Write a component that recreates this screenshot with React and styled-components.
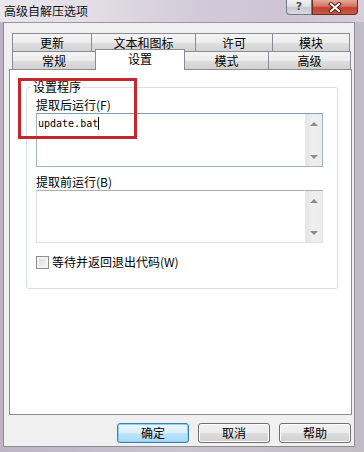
import React from "react";
import styled, { createGlobalStyle } from "styled-components";

const GlobalStyle = createGlobalStyle`
  html, body {
    margin: 0;
    padding: 0;
  }
  body {
    width: 364px;
    height: 452px;
    overflow: hidden;
    font-family: "Noto Sans CJK SC", "Liberation Sans", sans-serif;
    font-size: 12px;
    color: #000;
  }
`;

const Window = styled.div`
  position: relative;
  width: 364px;
  height: 452px;
  display: flex;
  flex-direction: column;
  background: linear-gradient(90deg, #bdb5c4 0%, #c9c2cf 50%, #c2bcc6 100%);
  overflow: hidden;
`;

const TitleBar = styled.div`
  height: 22px;
  flex: none;
  display: flex;
  align-items: flex-start;
  padding: 0 6px 0 4px;
  background: linear-gradient(90deg, #e9e6ec 0%, #e2dde6 25%, #d2cad8 55%, #cdc5d3 80%, #d6cfdb 100%);
`;

const Title = styled.div`
  flex: 1;
  line-height: 22px;
  font-size: 12px;
  color: #111;
`;

const CaptionButton = styled.div`
  height: 15px;
  width: ${(p) => p.$w}px;
  display: flex;
  align-items: center;
  justify-content: center;
  box-sizing: border-box;
  border: 1px solid ${(p) => (p.$close ? "#6b2a22" : "#727884")};
  border-top: none;
  border-radius: ${(p) => (p.$close ? "0 0 4px 0" : "0 0 0 4px")};
  background: ${(p) =>
    p.$close
      ? "linear-gradient(180deg, #e8a898 0%, #d27563 45%, #c2412e 55%, #c85a44 100%)"
      : "linear-gradient(180deg, #f2f2f4 0%, #dfe0e4 45%, #c9cbd1 55%, #d8dade 100%)"};
  color: #555;
  font-family: "DejaVu Sans", sans-serif;
  font-size: 11px;
  font-weight: bold;
  line-height: 14px;
`;

const Body = styled.div`
  flex: 1;
  display: flex;
  margin: 0 9px 5px 3px;
`;

const Client = styled.div`
  flex: 1;
  display: flex;
  flex-direction: column;
  background: #f0f0f0;
  border: 1px solid #8d8a92;
  border-top-color: #9a96a0;
  padding: 10px 2px 3px 5px;
`;

const TabStrip = styled.div`
  display: flex;
  flex-direction: column;
  padding-left: 3px;
`;

const TabRow = styled.div`
  display: flex;
  align-items: flex-end;
  height: ${(p) => p.$h}px;
  margin-top: ${(p) => (p.$back ? 0 : -1)}px;
`;

const Tab = styled.div`
  position: relative;
  box-sizing: border-box;
  width: ${(p) => p.$w}px;
  height: ${(p) => (p.$active ? 21 : p.$h)}px;
  margin-left: -1px;
  margin-bottom: ${(p) => (p.$active ? -1 : 0)}px;
  z-index: ${(p) => (p.$active ? 2 : 1)};
  border: 1px solid #898c95;
  border-bottom: none;
  background: ${(p) =>
    p.$active
      ? "#ffffff"
      : "linear-gradient(180deg, #f4f4f4 0%, #ececec 50%, #dedede 51%, #d2d2d2 100%)"};
  text-align: center;
  line-height: ${(p) => (p.$active ? 17 : p.$h - 1)}px;
  font-size: 12px;
  &:first-child {
    margin-left: 0;
  }
`;

const Panel = styled.div`
  flex: 1;
  position: relative;
  z-index: 1;
  background: #ffffff;
  border: 1px solid #898c95;
  padding: 10px 13px 0 16px;
`;

const Group = styled.fieldset`
  margin: 0;
  padding: 2px 14px 19px 9px;
  border: 1px solid #d5dfe5;
  border-radius: 3px;
  display: flex;
  flex-direction: column;
`;

const Legend = styled.legend`
  margin-left: -5px;
  padding: 0 2px;
  line-height: 14px;
  font-size: 12px;
`;

const FieldLabel = styled.div`
  line-height: 14px;
  font-size: 12px;
  margin-top: ${(p) => p.$mt}px;
`;

const TextBox = styled.div`
  position: relative;
  display: flex;
  height: ${(p) => p.$h}px;
  margin-top: 1px;
  box-sizing: border-box;
  border: 1px solid ${(p) => (p.$focus ? "#9fb6c6" : "#dde1e7")};
  border-top-color: ${(p) => (p.$focus ? "#7f9cb0" : "#abadb3")};
  background: #fff;
`;

const TextArea = styled.div`
  flex: 1;
  padding: 2px 1px;
  font-family: "DejaVu Sans Mono", "Liberation Mono", monospace;
  font-size: 10px;
  line-height: 15px;
  display: flex;
  align-items: flex-start;
`;

const Caret = styled.span`
  display: inline-block;
  width: 1px;
  height: 13px;
  margin-top: 1px;
  background: #000;
`;

const ScrollBar = styled.div`
  width: 17px;
  display: flex;
  flex-direction: column;
  justify-content: space-between;
  align-items: center;
  padding: 8px 0 7px;
  box-sizing: border-box;
  background: linear-gradient(90deg, #e4e4e4 0%, #efefef 40%, #ececec 100%);
  border-left: 1px solid #e8e8e8;
`;

const Arrow = styled.span`
  width: 0;
  height: 0;
  border-left: 4px solid transparent;
  border-right: 4px solid transparent;
  ${(p) =>
    p.$down ? "border-top: 4px solid #8b8b8b;" : "border-bottom: 4px solid #8b8b8b;"}
`;

const CheckRow = styled.label`
  display: flex;
  align-items: center;
  gap: 3px;
  margin-top: 12px;
  line-height: 14px;
`;

const CheckBox = styled.span`
  width: 13px;
  height: 13px;
  box-sizing: border-box;
  border: 1px solid #8e8f8f;
  background: linear-gradient(135deg, #d2d2d2 0%, #ececec 60%, #f8f8f8 100%);
  box-shadow: inset 0 0 0 2px #f4f4f4;
`;

const ButtonRow = styled.div`
  display: flex;
  justify-content: flex-end;
  gap: 9px;
  margin-top: 8px;
  padding-right: 1px;
`;

const Button = styled.div`
  width: 72px;
  height: 20px;
  box-sizing: border-box;
  border: 1px solid ${(p) => (p.$default ? "#3c7fb1" : "#707070")};
  border-radius: 3px;
  background: ${(p) =>
    p.$default
      ? "linear-gradient(180deg, #eaf6fd 0%, #d9f0fc 50%, #bee6fd 51%, #a7d9f5 100%)"
      : "linear-gradient(180deg, #f2f2f2 0%, #ebebeb 50%, #dddddd 51%, #cfcfcf 100%)"};
  box-shadow: inset 0 0 0 1px ${(p) => (p.$default ? "#8ed0f2" : "#fcfcfc")};
  text-align: center;
  line-height: 18px;
  font-size: 12px;
`;

const Highlight = styled.div`
  position: absolute;
  left: 18px;
  top: 78px;
  width: 119px;
  height: 61px;
  box-sizing: border-box;
  border: 3px solid #c4282c;
  z-index: 10;
  pointer-events: none;
`;

const topTabs = [
  { label: "更新", w: 80 },
  { label: "文本和图标", w: 105 },
  { label: "许可", w: 78 },
  { label: "模块", w: 78 },
];

const frontTabs = [
  { label: "常规", w: 84 },
  { label: "设置", w: 90, active: true },
  { label: "模式", w: 85 },
  { label: "高级", w: 83 },
];

const CloseGlyph = () => (
  <svg width="14" height="11" viewBox="0 0 14 11">
    <path d="M3 2 L11 9 M11 2 L3 9" stroke="#5a1a14" strokeWidth="4" strokeLinecap="square" />
    <path d="M3 2 L11 9 M11 2 L3 9" stroke="#ffffff" strokeWidth="2" strokeLinecap="square" />
  </svg>
);

export default function App() {
  return (
    <>
      <GlobalStyle />
      <Window>
        <TitleBar>
          <Title>高级自解压选项</Title>
          <CaptionButton $w={26}>?</CaptionButton>
          <CaptionButton $w={46} $close>
            <CloseGlyph />
          </CaptionButton>
        </TitleBar>
        <Body>
          <Client>
            <TabStrip>
              <TabRow $h={19} $back>
                {topTabs.map((t) => (
                  <Tab key={t.label} $w={t.w} $h={19}>
                    {t.label}
                  </Tab>
                ))}
              </TabRow>
              <TabRow $h={18}>
                {frontTabs.map((t) => (
                  <Tab key={t.label} $w={t.w} $h={18} $active={t.active}>
                    {t.label}
                  </Tab>
                ))}
              </TabRow>
            </TabStrip>
            <Panel>
              <Group>
                <Legend>设置程序</Legend>
                <FieldLabel $mt={2}>提取后运行(F)</FieldLabel>
                <TextBox $h={54} $focus>
                  <TextArea>
                    update.bat
                    <Caret />
                  </TextArea>
                  <ScrollBar>
                    <Arrow />
                    <Arrow $down />
                  </ScrollBar>
                </TextBox>
                <FieldLabel $mt={8}>提取前运行(B)</FieldLabel>
                <TextBox $h={53}>
                  <TextArea />
                  <ScrollBar>
                    <Arrow />
                    <Arrow $down />
                  </ScrollBar>
                </TextBox>
                <CheckRow>
                  <CheckBox />
                  等待并返回退出代码(W)
                </CheckRow>
              </Group>
            </Panel>
            <ButtonRow>
              <Button $default>确定</Button>
              <Button>取消</Button>
              <Button>帮助</Button>
            </ButtonRow>
          </Client>
        </Body>
        <Highlight />
      </Window>
    </>
  );
}
